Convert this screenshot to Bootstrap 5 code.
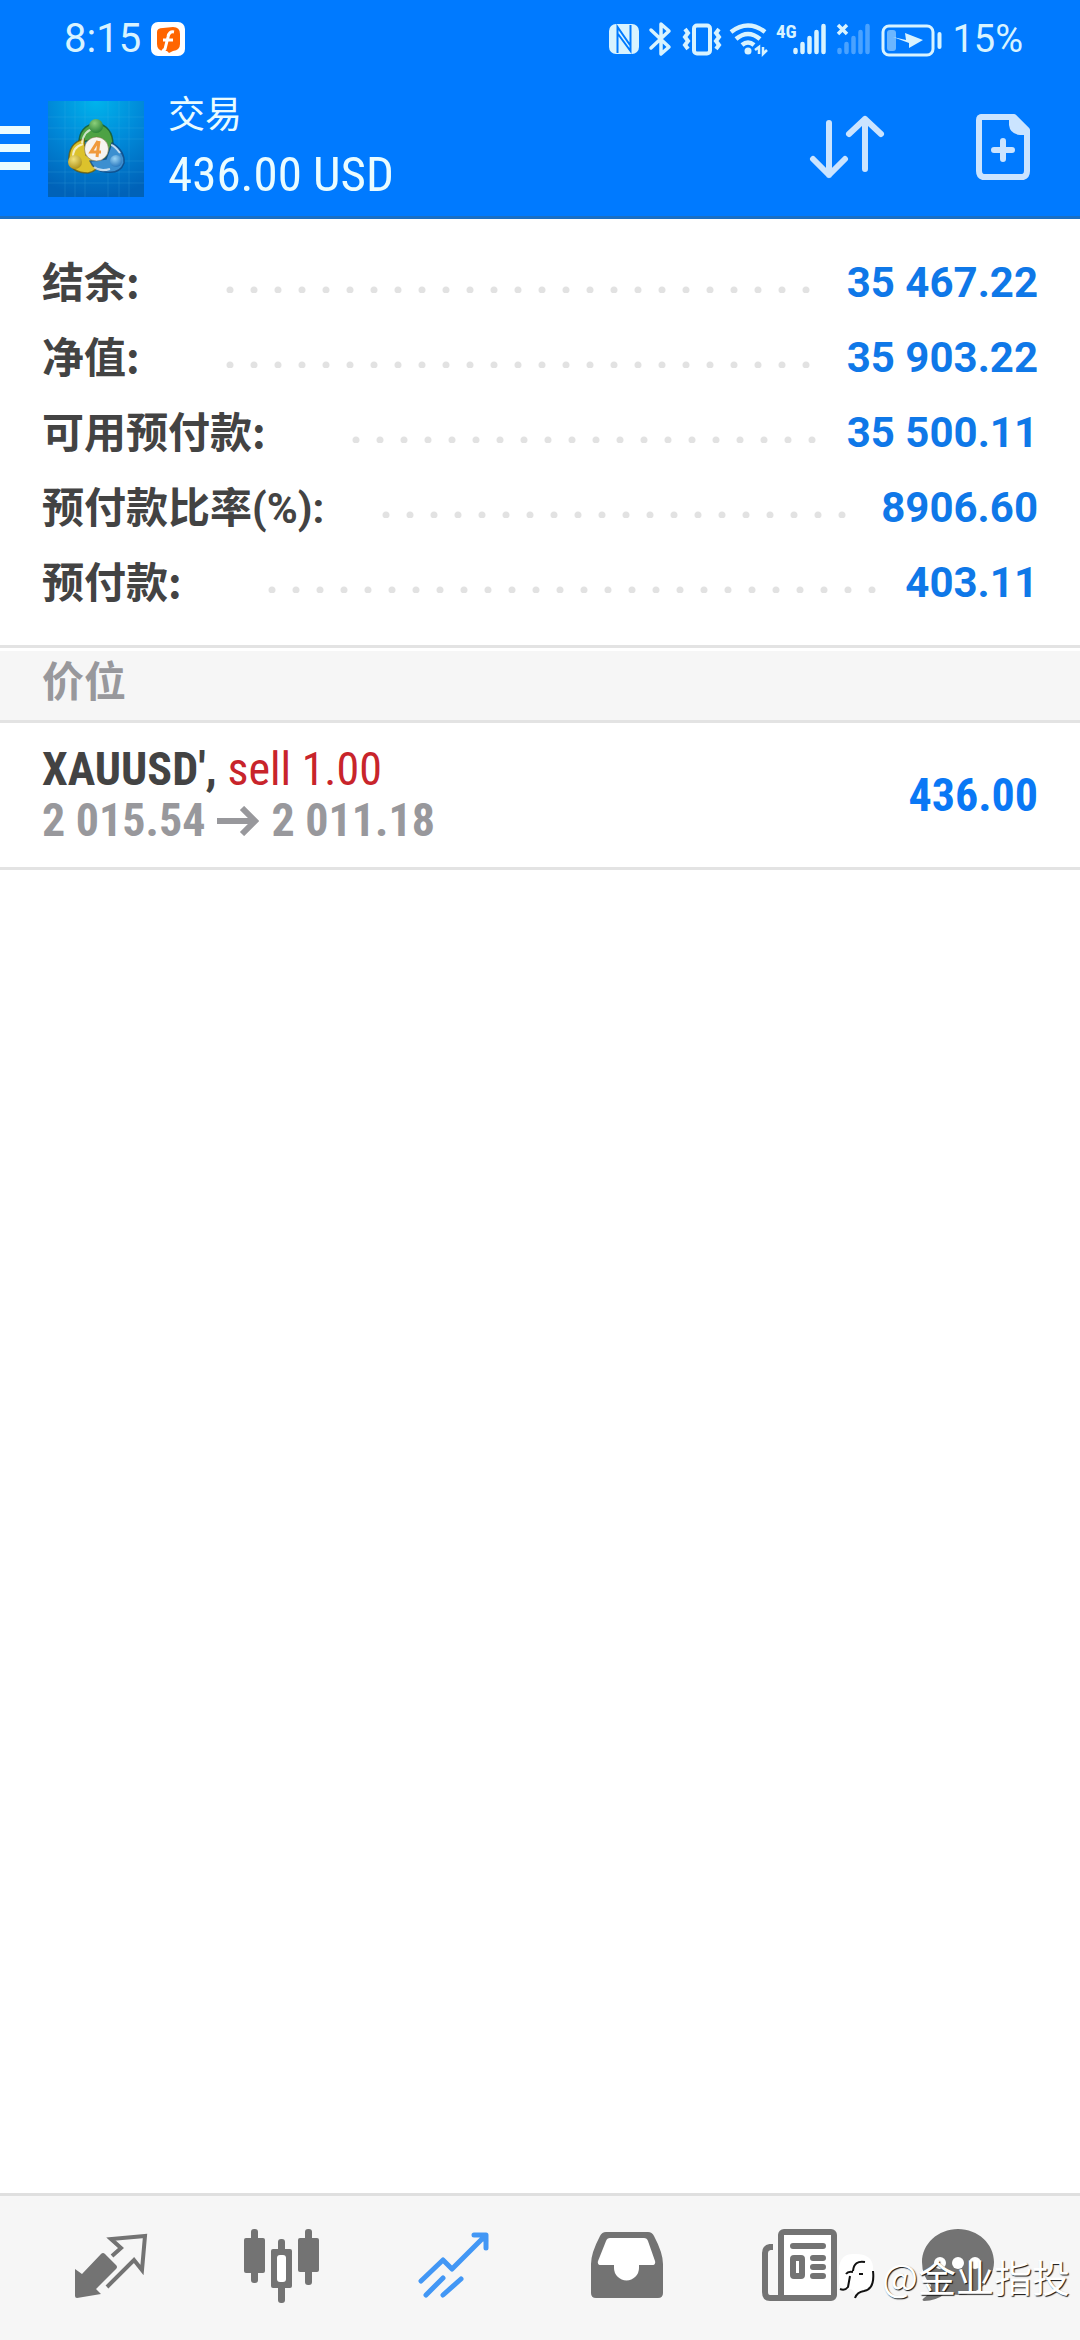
<!DOCTYPE html>
<html lang="zh-CN">
<head>
<meta charset="utf-8">
<meta name="viewport" content="width=device-width, initial-scale=1">
<title>交易</title>
<link href="https://cdn.jsdelivr.net/npm/bootstrap@5.3.0/dist/css/bootstrap.min.css" rel="stylesheet">
<style>
  :root { --brand: #007aff; --value: #0f78e8; --ink: #434343; --muted-ink: #98989c; --rule: #e3e3e3; }
  body { font-family: Roboto, "Noto Sans CJK SC", sans-serif; background: #fff; color: var(--ink); }
  svg { display: block; flex: none; }
  .narrow { font-family: "Roboto Condensed", "Liberation Sans Narrow", Roboto, sans-serif; }

  .top { background: var(--brand); border-bottom: 3px solid #1a6fc4; color: #eafcff; }
  .status { height: 78px; padding: 0 57px 0 64px; font-size: 38px; line-height: 78px; color: #d8f3ff; }
  .clock { font-size: 40px; gap: 10px; }
  .app-line { height: 138px; padding-right: 50px; }
  .icon-btn { border: 0; padding: 0; background: none; color: #cbe4ff; }
  .actions { gap: 91px; }
  .logo-gap { margin: 3px 24px 0 18px; }
  .title-small { font-family: "Noto Sans CJK SC", sans-serif; font-size: 37px; line-height: 56px; }
  .title-big { font-size: 49px; line-height: 70px; }

  .summary { padding: 26px 42px 25px; }
  .summary-row { height: 75px; font-size: 42px; line-height: 75px; font-weight: 700; }
  .summary-row dt { font-family: "Noto Sans CJK SC", sans-serif; font-weight: 700; padding-bottom: 6px; }
  .latin { font-family: Roboto, sans-serif; font-weight: 700; line-height: 1; }
  .summary-row dd { color: var(--value); }
  .dots { height: 7px; margin: 14px 26px 0 86px;
          background: radial-gradient(circle at 4px 4px, #e2e2e2 3px, transparent 4px) 0 0 / 24px 7px repeat-x; }
  .dots-near { margin-left: 58px; }

  .section-head { border-top: 3px solid var(--rule); border-bottom: 3px solid var(--rule); padding-top: 3px; }
  .section-head h2 { background: #f6f6f6; color: var(--muted-ink); font: 700 42px/56px "Noto Sans CJK SC", sans-serif; padding: 0 42px 13px; }
  .position-row { border-bottom: 3px solid var(--rule); padding: 21px 42px; font-size: 46px; line-height: 51px; font-weight: 700; }
  .side { color: #c8242b; font-weight: 400; }
  .prices { color: var(--muted-ink); gap: 12px; }
  .profit { color: #0a78f5; }

  .tabs { background: #f6f6f6; border-top: 3px solid #dfdfdf; padding: 22px 24px 26px; color: #737373; }
  .tabs a { color: inherit; }
  .tabs a.active { color: #4297f5; }
  .watermark { right: 10px; bottom: 39px; font: 38px/50px "Noto Sans CJK SC", sans-serif; color: #fff;
               text-shadow: 1px 1px 1px #111; gap: 7px; pointer-events: none; }
</style>
</head>
<body>
<div class="d-flex flex-column min-vh-100">
  <header class="top">
    <div class="status d-flex align-items-center justify-content-between">
      <div class="clock d-flex align-items-center">
        <span>8:15</span>
        <svg width="34" height="34" viewBox="0 0 34 34"><rect width="34" height="34" rx="7" fill="#fff"/><path d="M6 10Q6 6 12 6L22 5Q29 5 29 12V22Q29 28 22 29L18 31L16 29H12Q6 28 6 22Z" fill="#ff6500"/><path d="M23 10Q18 9 17 15L14 27Q13 29 11 28M12 18H22" fill="none" stroke="#fff" stroke-width="3"/></svg>
      </div>
      <div class="d-flex align-items-center">
        <svg width="336" height="40" viewBox="608 17 336 40" fill="none" stroke="#d8f3ff">
          <!-- NFC -->
          <rect x="609" y="22" width="30" height="30" rx="7" fill="#d8f3ff" stroke="none"/>
          <path d="M617.500 51V25L630 43M630.500 23V49L618 32" stroke="#007aff" stroke-width="2"/>
          <!-- bluetooth -->
          <path d="M651 28L669 45L661 52V22L669 29L651 46" stroke-width="3.500" stroke-linejoin="round" stroke-linecap="round"/>
          <!-- vibrate -->
          <rect x="694" y="23.500" width="16" height="28" rx="3" stroke-width="4"/>
          <path d="M685 27l3 4-3 4 3 4-3 4 3 4M719 27l-3 4 3 4-3 4 3 4-3 4" stroke-width="4"/>
          <!-- wifi -->
          <path d="M731 30Q748 17 765 30M736 37Q748 27 760 37M742 43Q748 38 754 43" stroke-width="4.500"/>
          <circle cx="748" cy="49" r="3.500" fill="#d8f3ff" stroke="none"/>
          <path d="M755 48l4-3v7M763 45v7l4-4" stroke-width="2.500"/>
          <!-- signal -->
          <path d="M795.500 48v2M802.500 42v8M809.500 36v14M816.500 30v20M823.500 24v26" stroke-width="4.500" stroke-linecap="round"/>
          <path d="M838 23l9 9M847 23l-9 9" stroke-width="3.500"/>
          <path d="M839.500 48v2M846.500 42v8M853.500 36v14M860.500 30v20M867.500 24v26" stroke-width="4.500" stroke-linecap="round" stroke="#4aa2ff"/>
          <!-- battery -->
          <rect x="883" y="24" width="50" height="29" rx="6" stroke-width="3"/>
          <rect x="887" y="28" width="9" height="21" rx="3" fill="#6bb6ff" stroke="none"/>
          <path d="M893 35L906 38L905 31L923 38L909 46V41Z" fill="#d8f3ff" stroke="none"/>
          <path d="M939.500 32v13" stroke-width="4" stroke-linecap="round"/>
          <text x="776" y="36" font-size="19" font-weight="700" font-family="Roboto Condensed, Liberation Sans Narrow, Roboto" fill="#d8f3ff" stroke="none">4G</text>
        </svg>
        <span class="ms-2">15%</span>
      </div>
    </div>
    <div class="app-line d-flex align-items-center">
      <button class="icon-btn" type="button" aria-label="菜单">
        <svg width="30" height="48" viewBox="0 0 30 48" fill="#eafcff"><path d="M0 3h30v8H0zM0 21h30v8H0zM0 39h30v8H0z"/></svg>
      </button>
      <svg class="logo-gap" width="96" height="96" viewBox="0 0 96 96">
        <defs>
          <radialGradient id="sky" cx=".5" cy="0" r="1"><stop offset="0" stop-color="#00b4ec"/><stop offset=".5" stop-color="#0088d8"/><stop offset="1" stop-color="#0062b8"/></radialGradient>
          <radialGradient id="gr" cx=".4" cy=".3" r=".8"><stop offset="0" stop-color="#8ccf7a"/><stop offset="1" stop-color="#1f7a30"/></radialGradient>
          <radialGradient id="ye" cx=".4" cy=".3" r=".8"><stop offset="0" stop-color="#f2e27a"/><stop offset="1" stop-color="#a88a10"/></radialGradient>
          <radialGradient id="bl" cx=".4" cy=".3" r=".8"><stop offset="0" stop-color="#9ad4f5"/><stop offset="1" stop-color="#1c6db8"/></radialGradient>
        </defs>
        <rect width="96" height="96" fill="url(#sky)"/>
        <path d="M17 0v96M27 0v96M37 0v96M60 0v96M71 0v96M81 0v96M0 16h96M0 27h96M0 38h96M0 60h96M0 71h96M0 82h96" stroke="#4cc0ef" stroke-opacity=".18"/>
        <g stroke-opacity=".7" stroke-width="1.500">
          <path d="M31 42Q31 25 48 22Q65 25 65 44Q62 56 54 58L48 38L38 40Z" fill="#4da244" stroke="#145020"/>
          <path d="M36 38Q20 42 21 60Q24 72 40 72Q50 70 50 62L38 54Z" fill="#dcc22c" stroke="#675200"/>
          <path d="M64 42Q77 50 76 62Q72 73 58 71Q46 70 42 60L58 58Z" fill="#3c8fd0" stroke="#0b3e78"/>
          <path d="M34 42Q36 29 46 28M25 58Q24 46 35 43M72 52Q66 44 63 44M46 66Q52 71 62 68" fill="none" stroke="#fff" stroke-width="2"/>
        </g>
        <circle cx="48" cy="25" r="7" fill="url(#gr)"/><circle cx="27" cy="61" r="7" fill="url(#ye)"/><circle cx="68" cy="60" r="6" fill="url(#bl)"/>
        <circle cx="48.500" cy="48" r="12" fill="#f7f4f0" stroke="#78683c" stroke-opacity=".5"/>
        <path d="M50 40L43 51H53M51 40L49 56" fill="none" stroke="#f09a3c" stroke-width="3"/>
      </svg>
      <div class="flex-grow-1">
        <div class="title-small">交易</div>
        <div class="title-big narrow">436.00 USD</div>
      </div>
      <div class="actions d-flex align-items-center">
        <button class="icon-btn" type="button" aria-label="排序">
          <svg width="76" height="68" viewBox="0 0 76 68" fill="none" stroke="currentColor" stroke-width="6" stroke-linecap="round" stroke-linejoin="round"><path d="M20 10V62M4 46L20 62L36 46M56 56V6M40 21L56 6L72 21"/></svg>
        </button>
        <button class="icon-btn" type="button" aria-label="新订单">
          <svg width="54" height="68" viewBox="0 0 54 68" fill="none" stroke="currentColor"><path d="M5 4H38L51 17V58Q51 63 47 64H7Q3 63 3 58V7Q3 4 6 4Z" stroke-width="6" stroke-linejoin="round"/><path d="M33 4H40L53 18V22H44Q34 21 33 12Z" fill="currentColor" stroke="none"/><path d="M27 28V46M18 37H36" stroke-width="6" stroke-linecap="round"/></svg>
        </button>
      </div>
    </div>
  </header>

  <main class="flex-grow-1">
    <section class="summary">
      <dl class="mb-0">
        <div class="summary-row d-flex align-items-center"><dt>结余:</dt><div class="dots flex-grow-1"></div><dd class="mb-0">35 467.22</dd></div>
        <div class="summary-row d-flex align-items-center"><dt>净值:</dt><div class="dots flex-grow-1"></div><dd class="mb-0">35 903.22</dd></div>
        <div class="summary-row d-flex align-items-center"><dt>可用预付款:</dt><div class="dots flex-grow-1"></div><dd class="mb-0">35 500.11</dd></div>
        <div class="summary-row d-flex align-items-center"><dt>预付款比率<span class="latin">(%):</span></dt><div class="dots dots-near flex-grow-1"></div><dd class="mb-0">8906.60</dd></div>
        <div class="summary-row d-flex align-items-center"><dt>预付款:</dt><div class="dots flex-grow-1"></div><dd class="mb-0">403.11</dd></div>
      </dl>
    </section>
    <section>
      <div class="section-head"><h2 class="mb-0">价位</h2></div>
      <div class="position-row narrow d-flex align-items-center justify-content-between">
        <div>
          <div>XAUUSD', <span class="side">sell 1.00</span></div>
          <div class="prices d-flex align-items-center"><span>2 015.54</span>
            <svg width="42" height="30" viewBox="0 0 42 30" fill="none" stroke="currentColor" stroke-width="6"><path d="M0 15H38M25 2L38 15L25 28"/></svg>
            <span>2 011.18</span></div>
        </div>
        <div class="profit">436.00</div>
      </div>
    </section>
  </main>

  <nav class="tabs position-relative">
    <div class="d-flex">
      <a href="#quotes" class="flex-fill d-flex justify-content-center" aria-label="行情">
        <svg width="96" height="96" viewBox="0 0 96 96"><path d="M13 51L20 56L39 36Q41 34 43 36L54 47Q56 49 54 51L34 71L39 76L15 80Q13 80 13 78Z" fill="currentColor"/><path d="M50 38L59 30L49 21L83 18L80 52L72 42L45 69" fill="none" stroke="currentColor" stroke-width="4"/></svg>
      </a>
      <a href="#chart" class="flex-fill d-flex justify-content-center" aria-label="图表">
        <svg width="96" height="96" viewBox="0 0 96 96" fill="currentColor"><rect x="17" y="11" width="7" height="54" rx="3"/><rect x="10" y="20" width="21" height="35" rx="2"/><rect x="71" y="11" width="7" height="56" rx="3"/><rect x="64" y="20" width="21" height="34" rx="2"/><rect x="44" y="21" width="7" height="64" rx="3"/><rect x="37" y="31" width="21" height="39" rx="2"/><rect x="43" y="37" width="9" height="27" rx="3" fill="#fff"/></svg>
      </a>
      <a href="#trade" class="active flex-fill d-flex justify-content-center" aria-label="交易" aria-current="page">
        <svg width="96" height="96" viewBox="0 0 96 96" fill="none" stroke="currentColor" stroke-width="5" stroke-linecap="round" stroke-linejoin="round"><path d="M15 63L37 42L46 51L79 18M68 17H80V30M76 18L80 23M20 77L37 60M37 77L55 61"/></svg>
      </a>
      <a href="#history" class="flex-fill d-flex justify-content-center" aria-label="历史">
        <svg width="96" height="96" viewBox="0 0 96 96" fill="currentColor"><path fill="#fff" d="M30 18H68L80 50H18Z"/><circle cx="48.500" cy="50" r="13" fill="#fff"/><path fill-rule="evenodd" d="M28 14H70Q74 14 76 18Q85 35 85 46V75Q85 80 80 80H18Q13 80 13 75V46Q13 35 22 18Q24 14 28 14ZM32 20Q29 20 28 23L20 43Q19 47 23 47H36V50A12 12 0 0 0 61 50V47H74Q78 47 77 43L70 23Q69 20 66 20Z"/></svg>
      </a>
      <a href="#news" class="flex-fill d-flex justify-content-center" aria-label="新闻">
        <svg width="96" height="96" viewBox="0 0 96 96" fill="none" stroke="currentColor" stroke-width="6"><rect x="31" y="14" width="53" height="66" rx="3" fill="#fff"/><path d="M23 29H20Q15 30 15 35V74Q15 80 20 80H34"/><path d="M43 28H73M63 40H73M63 49H73M63 58H73" stroke-linecap="round"/><rect x="43" y="40" width="9" height="18" rx="1"/></svg>
      </a>
      <a href="#messages" class="flex-fill d-flex justify-content-center" aria-label="消息">
        <svg width="96" height="96" viewBox="0 0 96 96"><path d="M36 11C56 11 72 26 72 44S56 77 38 77Q30 77 24 75Q14 83 2 83Q-1 82 2 80Q8 76 9 67Q0 58 0 44C0 26 16 11 36 11Z" fill="currentColor"/><g fill="#fff"><circle cx="18" cy="45" r="6"/><circle cx="36" cy="45" r="6"/><circle cx="53" cy="45" r="6"/></g></svg>
      </a>
    </div>
    <div class="watermark position-absolute d-flex align-items-center">
      <svg width="36" height="46" viewBox="0 0 36 46"><path d="M0 14Q2 1 14 1Q33 0 34 14V28Q34 36 24 37Q20 38 17 43Q16 38 12 36Q2 38 0 30Z" fill="#fff"/><path d="M34 18Q36 36 25 38Q18 39 16 45" fill="none" stroke="#111" stroke-width="2"/><path d="M26 9Q15 7 14 18M7 21Q9 18 14 19M20 21H24M11 23L9 34Q6 38 1 36" fill="none" stroke="#111" stroke-width="2"/></svg>
      <span>@金业指投</span>
    </div>
  </nav>
</div>
<script src="https://cdn.jsdelivr.net/npm/bootstrap@5.3.0/dist/js/bootstrap.bundle.min.js"></script>
</body>
</html>
